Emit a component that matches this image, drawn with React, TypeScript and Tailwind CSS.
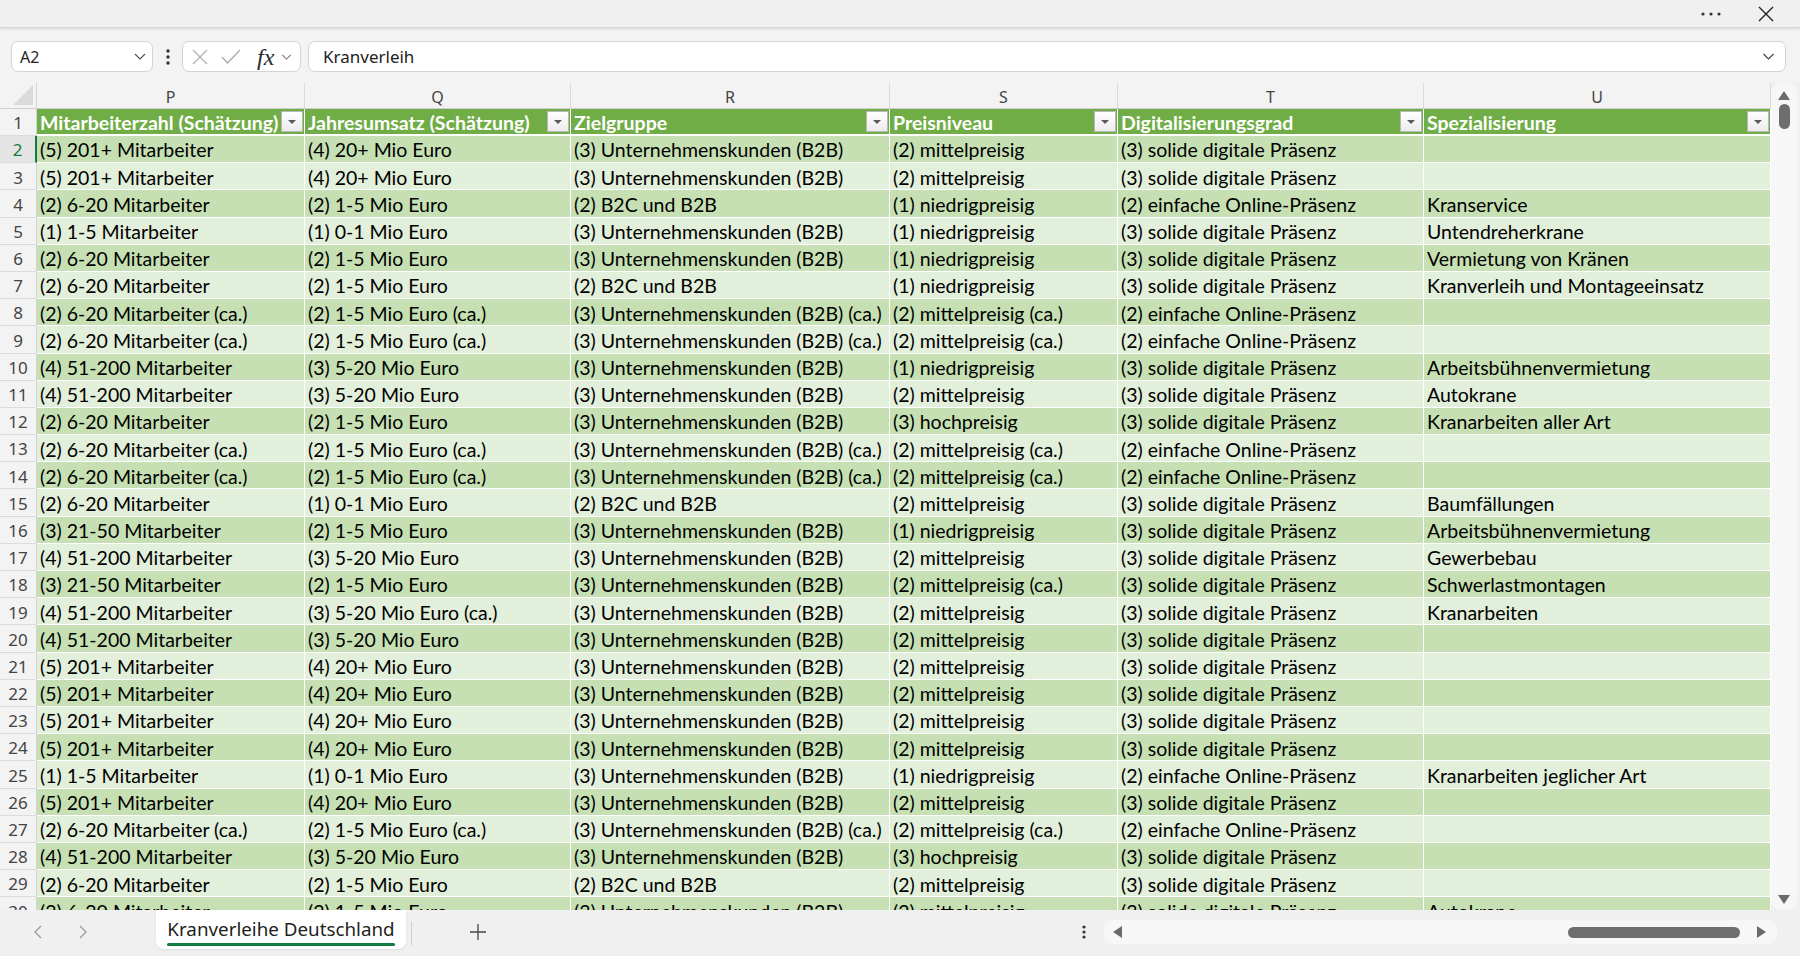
import React from 'react';

type Col = { letter: string; head: string; w: string };

const cols: Col[] = [
  { letter: 'P', head: 'Mitarbeiterzahl (Schätzung)', w: 'w-[268px]' },
  { letter: 'Q', head: 'Jahresumsatz (Schätzung)', w: 'w-[266px]' },
  { letter: 'R', head: 'Zielgruppe', w: 'w-[319px]' },
  { letter: 'S', head: 'Preisniveau', w: 'w-[228px]' },
  { letter: 'T', head: 'Digitalisierungsgrad', w: 'w-[306px]' },
  { letter: 'U', head: 'Spezialisierung', w: 'w-[347px]' },
];

const B2B = '(3) Unternehmenskunden (B2B)';
const B2BCA = '(3) Unternehmenskunden (B2B) (ca.)';
const MIX = '(2) B2C und B2B';
const SOLIDE = '(3) solide digitale Präsenz';
const EINF = '(2) einfache Online-Präsenz';

// rows 2..30
const rows: string[][] = [
  ['(5) 201+ Mitarbeiter', '(4) 20+ Mio Euro', B2B, '(2) mittelpreisig', SOLIDE, ''],
  ['(5) 201+ Mitarbeiter', '(4) 20+ Mio Euro', B2B, '(2) mittelpreisig', SOLIDE, ''],
  ['(2) 6-20 Mitarbeiter', '(2) 1-5 Mio Euro', MIX, '(1) niedrigpreisig', EINF, 'Kranservice'],
  ['(1) 1-5 Mitarbeiter', '(1) 0-1 Mio Euro', B2B, '(1) niedrigpreisig', SOLIDE, 'Untendreherkrane'],
  ['(2) 6-20 Mitarbeiter', '(2) 1-5 Mio Euro', B2B, '(1) niedrigpreisig', SOLIDE, 'Vermietung von Kränen'],
  ['(2) 6-20 Mitarbeiter', '(2) 1-5 Mio Euro', MIX, '(1) niedrigpreisig', SOLIDE, 'Kranverleih und Montageeinsatz'],
  ['(2) 6-20 Mitarbeiter (ca.)', '(2) 1-5 Mio Euro (ca.)', B2BCA, '(2) mittelpreisig (ca.)', EINF, ''],
  ['(2) 6-20 Mitarbeiter (ca.)', '(2) 1-5 Mio Euro (ca.)', B2BCA, '(2) mittelpreisig (ca.)', EINF, ''],
  ['(4) 51-200 Mitarbeiter', '(3) 5-20 Mio Euro', B2B, '(1) niedrigpreisig', SOLIDE, 'Arbeitsbühnenvermietung'],
  ['(4) 51-200 Mitarbeiter', '(3) 5-20 Mio Euro', B2B, '(2) mittelpreisig', SOLIDE, 'Autokrane'],
  ['(2) 6-20 Mitarbeiter', '(2) 1-5 Mio Euro', B2B, '(3) hochpreisig', SOLIDE, 'Kranarbeiten aller Art'],
  ['(2) 6-20 Mitarbeiter (ca.)', '(2) 1-5 Mio Euro (ca.)', B2BCA, '(2) mittelpreisig (ca.)', EINF, ''],
  ['(2) 6-20 Mitarbeiter (ca.)', '(2) 1-5 Mio Euro (ca.)', B2BCA, '(2) mittelpreisig (ca.)', EINF, ''],
  ['(2) 6-20 Mitarbeiter', '(1) 0-1 Mio Euro', MIX, '(2) mittelpreisig', SOLIDE, 'Baumfällungen'],
  ['(3) 21-50 Mitarbeiter', '(2) 1-5 Mio Euro', B2B, '(1) niedrigpreisig', SOLIDE, 'Arbeitsbühnenvermietung'],
  ['(4) 51-200 Mitarbeiter', '(3) 5-20 Mio Euro', B2B, '(2) mittelpreisig', SOLIDE, 'Gewerbebau'],
  ['(3) 21-50 Mitarbeiter', '(2) 1-5 Mio Euro', B2B, '(2) mittelpreisig (ca.)', SOLIDE, 'Schwerlastmontagen'],
  ['(4) 51-200 Mitarbeiter', '(3) 5-20 Mio Euro (ca.)', B2B, '(2) mittelpreisig', SOLIDE, 'Kranarbeiten'],
  ['(4) 51-200 Mitarbeiter', '(3) 5-20 Mio Euro', B2B, '(2) mittelpreisig', SOLIDE, ''],
  ['(5) 201+ Mitarbeiter', '(4) 20+ Mio Euro', B2B, '(2) mittelpreisig', SOLIDE, ''],
  ['(5) 201+ Mitarbeiter', '(4) 20+ Mio Euro', B2B, '(2) mittelpreisig', SOLIDE, ''],
  ['(5) 201+ Mitarbeiter', '(4) 20+ Mio Euro', B2B, '(2) mittelpreisig', SOLIDE, ''],
  ['(5) 201+ Mitarbeiter', '(4) 20+ Mio Euro', B2B, '(2) mittelpreisig', SOLIDE, ''],
  ['(1) 1-5 Mitarbeiter', '(1) 0-1 Mio Euro', B2B, '(1) niedrigpreisig', EINF, 'Kranarbeiten jeglicher Art'],
  ['(5) 201+ Mitarbeiter', '(4) 20+ Mio Euro', B2B, '(2) mittelpreisig', SOLIDE, ''],
  ['(2) 6-20 Mitarbeiter (ca.)', '(2) 1-5 Mio Euro (ca.)', B2BCA, '(2) mittelpreisig (ca.)', EINF, ''],
  ['(4) 51-200 Mitarbeiter', '(3) 5-20 Mio Euro', B2B, '(3) hochpreisig', SOLIDE, ''],
  ['(2) 6-20 Mitarbeiter', '(2) 1-5 Mio Euro', MIX, '(2) mittelpreisig', SOLIDE, ''],
  ['(2) 6-20 Mitarbeiter', '(2) 1-5 Mio Euro', B2B, '(2) mittelpreisig', SOLIDE, 'Autokrane'],
];

const Chevron = ({ className = '' }: { className?: string }) => (
  <svg viewBox="0 0 12 7" className={className} fill="none" stroke="currentColor" strokeWidth="1.2">
    <path d="M1 1l5 5 5-5" />
  </svg>
);

const FilterButton = () => (
  <div className="w-[22px] h-[21px] shrink-0 mr-[1px] flex items-center justify-center bg-gradient-to-b from-white to-[#ececec] border border-[#b8b8b8]">
    <svg viewBox="0 0 8 4" className="w-[8px] h-[4px]">
      <path d="M0 0h8L4 4z" fill="#5a5a5a" />
    </svg>
  </div>
);

function DataRow({ n, cells }: { n: number; cells: string[] }) {
  const dark = n % 2 === 0;
  const sel = n === 2;
  return (
    <div className="flex h-[27.2px] shrink-0">
      <div
        className={`w-[37px] shrink-0 flex items-center justify-center pt-[2px] border-b border-[#dcdcdc] font-['Noto_Sans',sans-serif] text-[17px] ${
          sel
            ? 'bg-[#e4e4e4] text-[#107c41] border-r-2 border-r-[#107c41]'
            : 'bg-[#f3f3f3] text-[#444] border-r border-r-[#d4d4d4]'
        }`}
      >
        {n}
      </div>
      {cols.map((c, i) => (
        <div
          key={i}
          className={`${c.w} shrink-0 flex items-center pl-[3px] pt-[2px] overflow-hidden whitespace-nowrap border-r border-b border-white text-black font-['Lato',sans-serif] text-[19.5px] ${
            dark ? 'bg-[#c6e0b4]' : 'bg-[#e2efda]'
          }`}
        >
          {cells[i]}
        </div>
      ))}
    </div>
  );
}

export default function App() {
  return (
    <div className="w-full h-[956px] flex flex-col bg-[#f0f0f0] overflow-hidden font-['Noto_Sans',sans-serif]">
      {/* title strip */}
      <div className="h-[28px] shrink-0 flex items-center justify-end pr-[26px] bg-[#f0f0f0] border-b border-[#d6d6d6] shadow-[0_1px_3px_rgba(0,0,0,0.12)] relative z-10">
        <svg viewBox="0 0 20 4" className="w-[20px] h-[4px] text-[#333]">
          <circle cx="2" cy="2" r="1.6" fill="currentColor" />
          <circle cx="10" cy="2" r="1.6" fill="currentColor" />
          <circle cx="18" cy="2" r="1.6" fill="currentColor" />
        </svg>
        <svg viewBox="0 0 16 16" className="w-[16px] h-[16px] ml-[37px] text-[#222]" fill="none" stroke="currentColor" strokeWidth="1.4">
          <path d="M1 1l14 14M15 1L1 15" />
        </svg>
      </div>

      {/* formula bar */}
      <div className="h-[55px] shrink-0 flex items-start pt-[13px] bg-[#f3f3f3]">
        <div className="ml-[11px] w-[142px] h-[31px] flex items-center justify-between pl-[8px] pr-[6px] bg-white border border-[#d4d4d4] rounded-[7px]">
          <span className="text-[16px] text-[#222]">A2</span>
          <Chevron className="w-[12px] h-[7px] text-[#555]" />
        </div>
        <div className="w-[29px] h-[31px] flex items-center justify-center">
          <svg viewBox="0 0 4 16" className="w-[4px] h-[16px] text-[#333]">
            <circle cx="2" cy="2" r="1.7" fill="currentColor" />
            <circle cx="2" cy="8" r="1.7" fill="currentColor" />
            <circle cx="2" cy="14" r="1.7" fill="currentColor" />
          </svg>
        </div>
        <div className="w-[119px] h-[31px] flex items-center pl-[9px] bg-white border border-[#d4d4d4] rounded-[7px]">
          <svg viewBox="0 0 16 16" className="w-[16px] h-[16px] text-[#b0b0b0]" fill="none" stroke="currentColor" strokeWidth="1.2">
            <path d="M1 1l14 14M15 1L1 15" />
          </svg>
          <svg viewBox="0 0 20 15" className="w-[20px] h-[15px] ml-[13px] text-[#a8a8a8]" fill="none" stroke="currentColor" strokeWidth="1.2">
            <path d="M1 8l5.5 6L19 1" />
          </svg>
          <span className="ml-[16px] w-[23px] text-[24px] leading-none italic text-[#2a2a2a] font-['Liberation_Serif',serif]">fx</span>
          <Chevron className="ml-[1px] w-[11px] h-[6px] text-[#777]" />
        </div>
        <div className="ml-[7px] mr-[14px] flex-1 h-[31px] flex items-center justify-between pl-[14px] pr-[10px] bg-white border border-[#d4d4d4] rounded-[7px]">
          <span className="text-[17px] text-[#222]">Kranverleih</span>
          <Chevron className="w-[13px] h-[7px] text-[#444]" />
        </div>
      </div>

      {/* grid */}
      <div className="flex-1 flex min-h-0 bg-white">
        <div className="w-[1771px] shrink-0 flex flex-col overflow-hidden">
          {/* column letters */}
          <div className="flex h-[26px] shrink-0 bg-[#f3f3f3] border-b border-[#cfcfcf]">
            <div className="w-[37px] shrink-0 flex items-end justify-end pr-[3px] pb-[3px] border-r border-[#d4d4d4]">
              <svg viewBox="0 0 20 20" className="w-[20px] h-[20px]">
                <path d="M20 0V20H0z" fill="#dadada" />
              </svg>
            </div>
            {cols.map((c) => (
              <div key={c.letter} className={`${c.w} shrink-0 flex items-center justify-center pt-[2px] border-r border-[#dadada] text-[16px] text-[#444]`}>
                {c.letter}
              </div>
            ))}
          </div>
          {/* header row */}
          <div className="flex h-[27px] shrink-0">
            <div className="w-[37px] shrink-0 flex items-center justify-center pt-[2px] bg-[#f3f3f3] border-r border-[#d4d4d4] border-b border-b-[#dcdcdc] text-[17px] text-[#444]">
              1
            </div>
            {cols.map((c) => (
              <div
                key={c.letter}
                className={`${c.w} shrink-0 flex items-center bg-[#70ad47] border-r border-white border-b-2 border-b-white pl-[3px]`}
              >
                <span className="flex-1 pt-[2px] overflow-hidden whitespace-nowrap font-['Lato',sans-serif] font-bold text-[19.5px] text-white">
                  {c.head}
                </span>
                <FilterButton />
              </div>
            ))}
          </div>
          {rows.map((r, i) => (
            <DataRow key={i} n={i + 2} cells={r} />
          ))}
        </div>
        {/* vertical scrollbar */}
        <div className="flex-1 flex justify-start bg-[#f0f0f0]">
          <div className="w-[26px] h-full flex flex-col items-center bg-[#f7f7f7] rounded-t-[10px] rounded-b-[10px] pt-[8px] pb-[6px]">
            <svg viewBox="0 0 12 9" className="w-[12px] h-[9px]">
              <path d="M6 0l6 9H0z" fill="#6a6a6a" />
            </svg>
            <div className="mt-[4px] w-[11px] h-[25px] rounded-full bg-[#6e6e6e]" />
            <div className="flex-1" />
            <svg viewBox="0 0 12 9" className="w-[12px] h-[9px]">
              <path d="M0 0h12L6 9z" fill="#6a6a6a" />
            </svg>
          </div>
        </div>
      </div>

      {/* sheet tabs */}
      <div className="h-[46px] shrink-0 flex items-start bg-[#f0f0f0]">
        <div className="pl-[15px] flex h-[44px] items-center text-[#9a9a9a]">
          <div className="w-[45px] flex justify-center">
            <svg viewBox="0 0 8 14" className="w-[8px] h-[14px]" fill="none" stroke="currentColor" strokeWidth="1.3">
              <path d="M7 1L1 7l6 6" />
            </svg>
          </div>
          <div className="w-[45px] flex justify-center">
            <svg viewBox="0 0 8 14" className="w-[8px] h-[14px]" fill="none" stroke="currentColor" strokeWidth="1.3">
              <path d="M1 1l6 6-6 6" />
            </svg>
          </div>
        </div>
        <div className="ml-[51px] w-[250px] h-[39px] flex flex-col items-center justify-end bg-white rounded-b-[8px] shadow-[0_1px_2px_rgba(0,0,0,0.08)] pb-[3px]">
          <span className="text-[18.8px] leading-[25px] text-[#1e1e1e] whitespace-nowrap">Kranverleihe Deutschland</span>
          <div className="w-[228px] h-[3px] bg-[#107c41] rounded-full mt-[1px]" />
        </div>
        <div className="ml-[5px] mt-[12px] w-px h-[23px] bg-[#cfcfcf]" />
        <div className="ml-[58px] h-[44px] flex items-center">
          <svg viewBox="0 0 16 16" className="w-[16px] h-[16px] text-[#444]" fill="none" stroke="currentColor" strokeWidth="1.3">
            <path d="M8 0v16M0 8h16" />
          </svg>
        </div>
        <div className="flex-1" />
        <div className="w-[20px] h-[44px] flex items-center justify-center">
          <svg viewBox="0 0 4 14" className="w-[4px] h-[14px] text-[#333]">
            <circle cx="2" cy="2" r="1.6" fill="currentColor" />
            <circle cx="2" cy="7" r="1.6" fill="currentColor" />
            <circle cx="2" cy="12" r="1.6" fill="currentColor" />
          </svg>
        </div>
        <div className="ml-[10px] mr-[23px] mt-[10px] w-[673px] h-[24px] flex items-center pl-[9px] pr-[11px] bg-[#f7f7f7] rounded-[10px]">
          <svg viewBox="0 0 9 12" className="w-[9px] h-[12px]">
            <path d="M9 0v12L0 6z" fill="#6a6a6a" />
          </svg>
          <div className="flex-1" />
          <div className="w-[172px] h-[11px] rounded-full bg-[#6e6e6e]" />
          <div className="w-[17px]" />
          <svg viewBox="0 0 9 12" className="w-[9px] h-[12px]">
            <path d="M0 0v12l9-6z" fill="#6a6a6a" />
          </svg>
        </div>
      </div>
    </div>
  );
}
